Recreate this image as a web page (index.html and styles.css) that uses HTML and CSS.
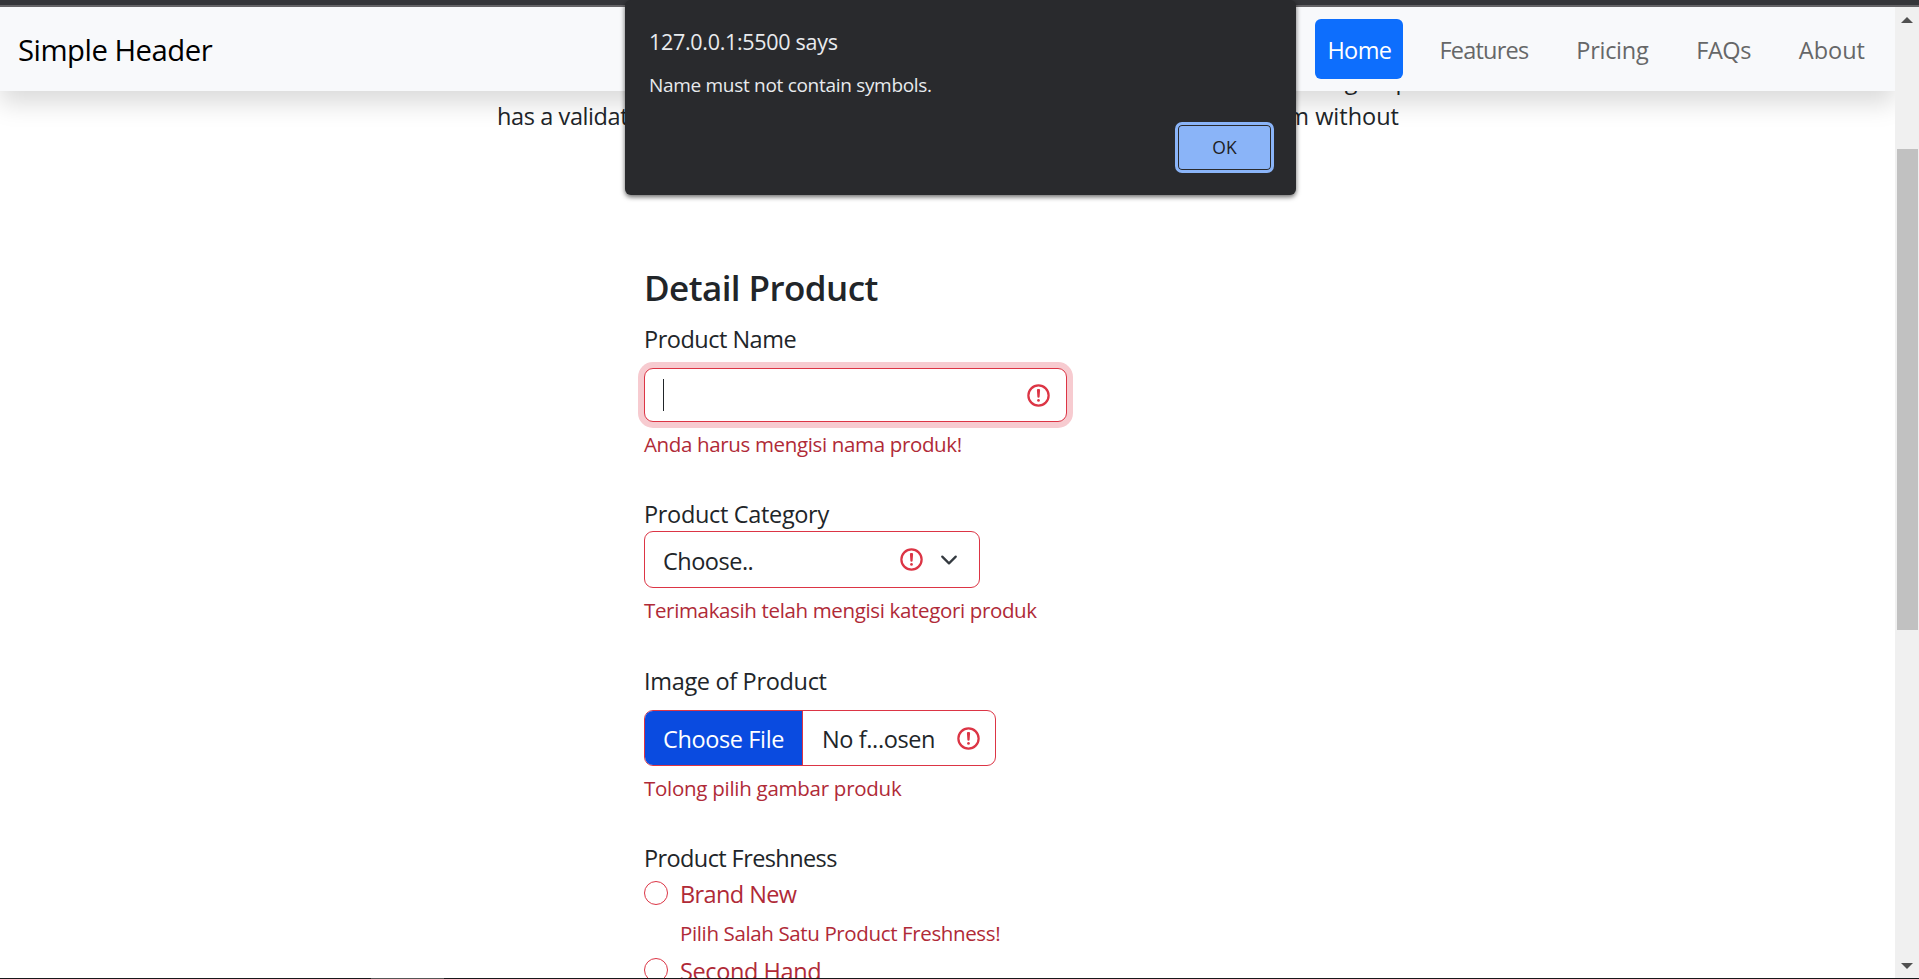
FILE: index.html
```html
<!DOCTYPE html>
<html lang="en">
<head>
<meta charset="utf-8">
<title>Detail Product</title>
<link rel="stylesheet" href="styles.css">
</head>
<body>
<svg width="0" height="0" class="defs">
  <symbol id="alert" viewBox="0 0 12 12"><circle cx="6" cy="6" r="4.5" fill="none" stroke="#dc3545"/><path d="M5.8 3.6h.4L6 6.5z" fill="none" stroke="#dc3545" stroke-linejoin="round"/><circle cx="6" cy="8.2" r=".6" fill="#dc3545"/></symbol>
</svg>
<div class="window">
  <div class="browser-edge"></div>
  <div class="viewport">
    <div class="page">
      <header class="header">
        <a class="brand">Simple Header</a>
        <nav class="nav">
          <a class="link active">Home</a>
          <a class="link features">Features</a>
          <a class="link pricing">Pricing</a>
          <a class="link faqs">FAQs</a>
          <a class="link about">About</a>
        </nav>
      </header>
      <main class="content">
        <div class="lead">
          <div class="lead-row end"><span>group</span></div>
          <div class="lead-row"><span class="lead-start">has a validation</span><span>form without</span></div>
        </div>
        <form class="form">
          <h2 class="title">Detail Product</h2>
          <section class="field name">
            <label class="label">Product Name</label>
            <div class="control input"><i class="caret"></i><svg class="alert"><use href="#alert"/></svg></div>
            <p class="feedback">Anda harus mengisi nama produk!</p>
          </section>
          <section class="field category">
            <label class="label">Product Category</label>
            <div class="control select"><span class="select-value">Choose..</span><svg class="alert"><use href="#alert"/></svg><svg class="chevron" viewBox="0 0 16 16"><path d="m2 5 6 6 6-6" fill="none" stroke="#343a40" stroke-width="2" stroke-linecap="round" stroke-linejoin="round"/></svg></div>
            <p class="feedback">Terimakasih telah mengisi kategori produk</p>
          </section>
          <section class="field image">
            <label class="label">Image of Product</label>
            <div class="control file"><span class="file-button">Choose File</span><span class="file-name">No f...osen</span><svg class="alert"><use href="#alert"/></svg></div>
            <p class="feedback">Tolong pilih gambar produk</p>
          </section>
          <section class="field freshness">
            <label class="label">Product Freshness</label>
            <div class="option"><i class="radio"></i><span class="new">Brand New</span></div>
            <p class="feedback">Pilih Salah Satu Product Freshness!</p>
            <div class="option"><i class="radio"></i><span>Second Hand</span></div>
          </section>
        </form>
      </main>
    </div>
    <div class="scrollbar"><i class="up"></i><i class="thumb"></i><i class="down"></i></div>
  </div>
  <div class="taskbar"><i></i></div>
</div>
<div class="dialog">
  <div class="dialog-title">127.0.0.1:5500 says</div>
  <div class="dialog-text">Name must not contain symbols.</div>
  <button class="ok">OK</button>
</div>
</body>
</html>
```
FILE: styles.css
```css
* { box-sizing: border-box; }
html, body { margin: 0; height: 100%; overflow: hidden; }
body { font: 23.5px/36px "Open Sans", "Noto Sans", sans-serif; color: #212529; background: #fff; white-space: nowrap; }
.defs { position: absolute; }

/* Browser frame */
.window { display: flex; flex-direction: column; height: 979px; width: 1919px; }
.browser-edge { flex: none; height: 7px; background: #35363a; border-bottom: 2px solid #656467; }
.viewport { flex: 1; min-height: 0; display: flex; }
.page { flex: 1; overflow: hidden; display: flex; flex-direction: column; }

/* Header */
.header { flex: none; position: relative; z-index: 2; height: 84px; display: flex; justify-content: space-between; align-items: center; padding: 0 18px; background: #f8f9fb; box-shadow: 0 12px 24px rgba(0, 0, 0, .15); }
.brand { padding-top: 2px; font-size: 29.3px; letter-spacing: -.5px; color: #000; }
.nav { display: flex; gap: 24px; }
.link { height: 60px; padding: 13px 12px 11px; border-radius: 6px; color: #666768; }
.link.active { background: #0d6efd; color: #fff; letter-spacing: -.6px; }
.features { letter-spacing: -.78px; }
.pricing { letter-spacing: -.29px; }
.faqs { letter-spacing: -.5px; }

/* Intro text */
.content { margin-top: -29px; padding-left: 497px; }
.lead { width: 902px; }
.lead-row { display: flex; justify-content: space-between; }
.lead-row.end { justify-content: flex-end; margin-right: -11px; }
.lead-start { letter-spacing: -.4px; }

/* Form */
.form { margin: 132px 0 0 147px; width: 423px; }
.title { margin: 0 0 12px; font-size: 35px; line-height: 43px; font-weight: 600; letter-spacing: -.57px; }
.label { display: block; height: 36px; letter-spacing: -.33px; }
.name .label { letter-spacing: -.5px; }
.freshness .label { letter-spacing: -.6px; }
.control { display: flex; align-items: center; border: 1px solid #dc3545; border-radius: 9px; background: #fff; }
.alert { width: 27px; height: 27px; flex: none; }
.feedback { margin: 7px 0 0; font-size: 20.5px; line-height: 31px; letter-spacing: -.35px; color: #b02a37; }
.field { margin-bottom: 36px; }
.input { margin-top: 11px; height: 54px; padding: 0 14px 0 18px; justify-content: space-between; box-shadow: 0 0 0 6px #f7cbd0; }
.caret { width: 1px; height: 32px; background: #212529; }
.category { margin-bottom: 37px; }
.category .label { height: 35px; }
.select { width: 336px; height: 57px; padding-left: 18px; }
.select-value { padding-top: 2px; letter-spacing: -.5px; }
.select .alert { margin-left: auto; }
.chevron { width: 18px; height: 18px; margin: 0 21px 0 15px; }
.file { margin-top: 11px; width: 352px; height: 56px; overflow: hidden; letter-spacing: -.38px; }
.file-button { width: 158px; height: 54px; padding: 10px 18px 8px; background: #0a4be0; color: #fff; border-right: 1px solid #dc3545; }
.file-name { margin-left: 19px; padding-top: 2px; }
.file .alert { margin: 0 13px 0 auto; }
.image .feedback { letter-spacing: -.27px; }
.option { display: flex; gap: 12px; height: 36px; letter-spacing: -.4px; color: #b02a37; }
.option .new { letter-spacing: -.6px; }
.radio { width: 24px; height: 24px; margin-top: 5px; border: 1px solid #dc3545; border-radius: 50%; }
.freshness .feedback { margin: 6px 0 4px 36px; letter-spacing: -.37px; }

/* Scrollbar and bottom edge */
.scrollbar { width: 24px; background: #f0f0f0; display: flex; flex-direction: column; align-items: center; }
.up, .down { width: 12px; height: 6px; background: #505050; }
.up { margin-top: 10px; clip-path: polygon(50% 0, 100% 100%, 0 100%); }
.thumb { width: 21px; height: 481px; margin-top: 126px; background: #c1c1c1; }
.down { margin: auto 0 9px; clip-path: polygon(0 0, 100% 0, 50% 100%); }
.taskbar { height: 1px; background: #17171a; }
.taskbar i { display: block; width: 73px; height: 1px; margin-left: 371px; background: #555; }

/* Alert dialog */
.dialog { position: absolute; z-index: 5; left: 625px; top: 0; width: 671px; height: 195px; padding: 24px 22px 22px 24px; display: flex; flex-direction: column; background: #292a2d; color: #e8eaed; border-radius: 6px; box-shadow: 0 2px 5px rgba(0, 0, 0, .6); }
.dialog-title { font-size: 21.5px; line-height: 36px; letter-spacing: -.3px; }
.dialog-text { font-size: 19px; line-height: 30px; margin-top: 10px; letter-spacing: -.3px; }
.ok { align-self: flex-end; width: 99px; height: 51px; margin-top: 22px; padding: 0; border: 3px solid #8ab4f8; border-radius: 7px; background: #8ab4f8; box-shadow: inset 0 0 0 1px #292a2d; color: #202124; font: 500 17.5px/45px "Open Sans", sans-serif; }
```
